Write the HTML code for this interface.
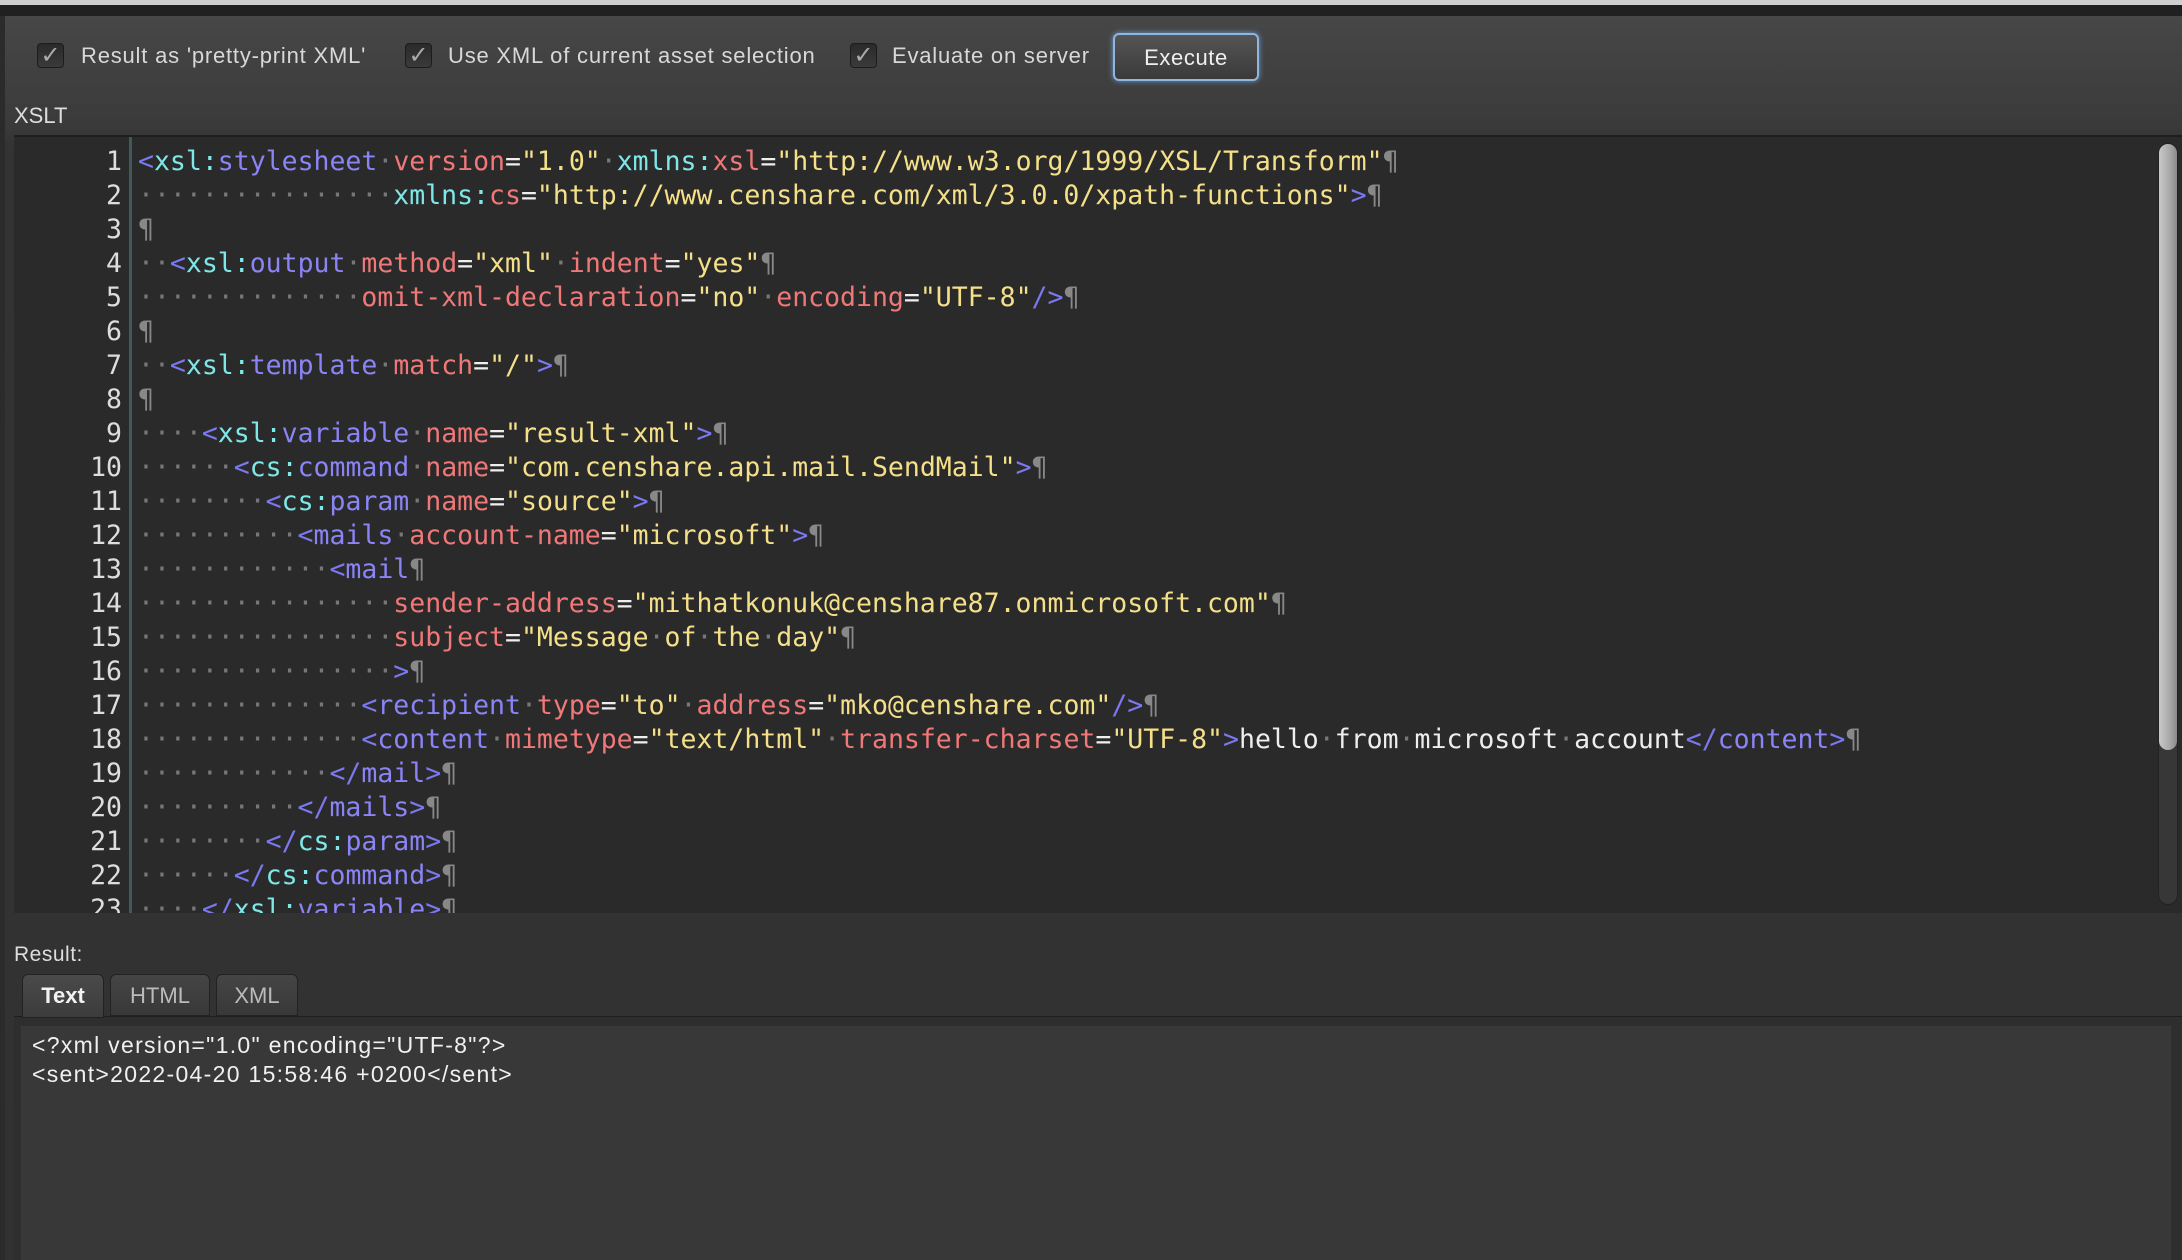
<!DOCTYPE html>
<html><head><meta charset="utf-8"><style>
*{margin:0;padding:0;box-sizing:border-box}
body{width:2182px;height:1260px;background:#2b2b2b;position:relative;overflow:hidden;font-family:"Liberation Sans",sans-serif;color:#ddd}
.topstrip{position:absolute;left:0;top:0;width:2182px;height:5px;background:#cfcfd2}
.dark{position:absolute;left:0;top:5px;width:2182px;height:11px;background:#202020}
.panel{position:absolute;left:5px;top:16px;right:0;bottom:0;background:linear-gradient(#474747 0px,#3a3a3a 110px,#333 130px,#313131 100%)}
.cb{position:absolute;top:43px;width:27px;height:25px;border-radius:4px;background:linear-gradient(#2a2a2a,#3a3a3a);border:1px solid #1c1c1c;color:#aaa;font-size:24px;text-align:center;line-height:24px}
.lbl{position:absolute;top:43px;font-size:22px;line-height:26px;color:#d8d8d8;letter-spacing:0.8px}
.btn{position:absolute;left:1113px;top:33px;width:146px;height:48px;border-radius:6px;border:2px solid #8fb6e0;box-shadow:0 0 6px #6a9ccc;background:linear-gradient(#555,#3a3a3a);color:#eee;font-size:22px;text-align:center;line-height:46px;letter-spacing:0.6px}
.xslt{position:absolute;left:14px;top:103px;font-size:22px;color:#ddd}
.editor{position:absolute;left:14px;top:135px;width:2168px;height:778px;background:#2a2a2a;overflow:hidden;border-top:2px solid #1e1e1e}
.gut{position:absolute;left:115px;top:0;width:3px;height:778px;background:#3e5a60}
.code{position:absolute;left:0;top:8px;font-family:"DejaVu Sans Mono","Liberation Mono",monospace;font-size:26.5px;line-height:34px;white-space:pre;color:#eee}
.ln{display:inline-block;width:108px;text-align:right;color:#ddd;margin-right:16px}
.p{color:#7b78f0}.n{color:#7ee8e8}.t{color:#8a84f5}.a{color:#f07878}.v{color:#f5e08a}.d{color:#777}.q{color:#888}
.sb{position:absolute;left:2158px;top:143px;width:20px;height:762px;border-radius:10px;background:#373737;border:1px solid #222}
.th{position:absolute;left:2159px;top:144px;width:18px;height:606px;border-radius:9px;background:linear-gradient(90deg,#c8c8c8,#a8a8a8 60%,#8a8a8a)}
.res{position:absolute;left:14px;top:943px;font-size:21px;color:#ddd;letter-spacing:0.5px}
.tab{position:absolute;top:974px;height:42px;border-radius:6px 6px 0 0;background:linear-gradient(#454545,#383838);border:1px solid #222;font-size:22px;color:#bbb;text-align:center;line-height:42px}
.tab.on{background:linear-gradient(#4a4a4a,#3c3c3c);color:#f2f2f2;font-weight:bold;height:44px}
.rbox{position:absolute;left:14px;top:1016px;width:2168px;height:244px;background:#2e2e2e;border-top:1px solid #1e1e1e}
.rin{position:absolute;left:21px;top:1026px;width:2150px;height:234px;background:#383838}
.rt{position:absolute;left:32px;top:1031px;font-size:23px;line-height:29px;color:#f0f0f0;white-space:pre;letter-spacing:1.3px}
</style></head><body>
<div class="topstrip"></div><div class="dark"></div>
<div class="panel"></div>
<div class="cb" style="left:37px">✓</div><div class="lbl" style="left:81px">Result as 'pretty-print XML'</div>
<div class="cb" style="left:405px">✓</div><div class="lbl" style="left:448px">Use XML of current asset selection</div>
<div class="cb" style="left:850px">✓</div><div class="lbl" style="left:892px">Evaluate on server</div>
<div class="btn">Execute</div>
<div class="xslt">XSLT</div>
<div class="editor">
<div class="gut"></div>
<div class="code"><span class="ln">1</span><span class="p">&lt;</span><span class="n">xsl:</span><span class="t">stylesheet</span><span class="d">·</span><span class="a">version</span>=<span class="v">"1.0"</span><span class="d">·</span><span class="n">xmlns:</span><span class="a">xsl</span>=<span class="v">"http://www.w3.org/1999/XSL/Transform"</span><span class="q">¶</span>
<span class="ln">2</span><span class="d">················</span><span class="n">xmlns:</span><span class="a">cs</span>=<span class="v">"http://www.censhare.com/xml/3.0.0/xpath-functions"</span><span class="p">&gt;</span><span class="q">¶</span>
<span class="ln">3</span><span class="q">¶</span>
<span class="ln">4</span><span class="d">··</span><span class="p">&lt;</span><span class="n">xsl:</span><span class="t">output</span><span class="d">·</span><span class="a">method</span>=<span class="v">"xml"</span><span class="d">·</span><span class="a">indent</span>=<span class="v">"yes"</span><span class="q">¶</span>
<span class="ln">5</span><span class="d">··············</span><span class="a">omit-xml-declaration</span>=<span class="v">"no"</span><span class="d">·</span><span class="a">encoding</span>=<span class="v">"UTF-8"</span><span class="p">/&gt;</span><span class="q">¶</span>
<span class="ln">6</span><span class="q">¶</span>
<span class="ln">7</span><span class="d">··</span><span class="p">&lt;</span><span class="n">xsl:</span><span class="t">template</span><span class="d">·</span><span class="a">match</span>=<span class="v">"/"</span><span class="p">&gt;</span><span class="q">¶</span>
<span class="ln">8</span><span class="q">¶</span>
<span class="ln">9</span><span class="d">····</span><span class="p">&lt;</span><span class="n">xsl:</span><span class="t">variable</span><span class="d">·</span><span class="a">name</span>=<span class="v">"result-xml"</span><span class="p">&gt;</span><span class="q">¶</span>
<span class="ln">10</span><span class="d">······</span><span class="p">&lt;</span><span class="n">cs:</span><span class="t">command</span><span class="d">·</span><span class="a">name</span>=<span class="v">"com.censhare.api.mail.SendMail"</span><span class="p">&gt;</span><span class="q">¶</span>
<span class="ln">11</span><span class="d">········</span><span class="p">&lt;</span><span class="n">cs:</span><span class="t">param</span><span class="d">·</span><span class="a">name</span>=<span class="v">"source"</span><span class="p">&gt;</span><span class="q">¶</span>
<span class="ln">12</span><span class="d">··········</span><span class="p">&lt;</span><span class="t">mails</span><span class="d">·</span><span class="a">account-name</span>=<span class="v">"microsoft"</span><span class="p">&gt;</span><span class="q">¶</span>
<span class="ln">13</span><span class="d">············</span><span class="p">&lt;</span><span class="t">mail</span><span class="q">¶</span>
<span class="ln">14</span><span class="d">················</span><span class="a">sender-address</span>=<span class="v">"mithatkonuk@censhare87.onmicrosoft.com"</span><span class="q">¶</span>
<span class="ln">15</span><span class="d">················</span><span class="a">subject</span>=<span class="v">"Message<span class="d">·</span>of<span class="d">·</span>the<span class="d">·</span>day"</span><span class="q">¶</span>
<span class="ln">16</span><span class="d">················</span><span class="p">&gt;</span><span class="q">¶</span>
<span class="ln">17</span><span class="d">··············</span><span class="p">&lt;</span><span class="t">recipient</span><span class="d">·</span><span class="a">type</span>=<span class="v">"to"</span><span class="d">·</span><span class="a">address</span>=<span class="v">"mko@censhare.com"</span><span class="p">/&gt;</span><span class="q">¶</span>
<span class="ln">18</span><span class="d">··············</span><span class="p">&lt;</span><span class="t">content</span><span class="d">·</span><span class="a">mimetype</span>=<span class="v">"text/html"</span><span class="d">·</span><span class="a">transfer-charset</span>=<span class="v">"UTF-8"</span><span class="p">&gt;</span>hello<span class="d">·</span>from<span class="d">·</span>microsoft<span class="d">·</span>account<span class="p">&lt;/</span><span class="t">content</span><span class="p">&gt;</span><span class="q">¶</span>
<span class="ln">19</span><span class="d">············</span><span class="p">&lt;/</span><span class="t">mail</span><span class="p">&gt;</span><span class="q">¶</span>
<span class="ln">20</span><span class="d">··········</span><span class="p">&lt;/</span><span class="t">mails</span><span class="p">&gt;</span><span class="q">¶</span>
<span class="ln">21</span><span class="d">········</span><span class="p">&lt;/</span><span class="n">cs:</span><span class="t">param</span><span class="p">&gt;</span><span class="q">¶</span>
<span class="ln">22</span><span class="d">······</span><span class="p">&lt;/</span><span class="n">cs:</span><span class="t">command</span><span class="p">&gt;</span><span class="q">¶</span>
<span class="ln">23</span><span class="d">····</span><span class="p">&lt;/</span><span class="n">xsl:</span><span class="t">variable</span><span class="p">&gt;</span><span class="q">¶</span></div>
</div>
<div class="sb"></div><div class="th"></div>
<div class="res">Result:</div>
<div class="rbox"></div>
<div class="tab on" style="left:22px;width:82px">Text</div>
<div class="tab" style="left:110px;width:100px">HTML</div>
<div class="tab" style="left:216px;width:82px">XML</div>
<div class="rin"></div>
<div class="rt">&lt;?xml version="1.0" encoding="UTF-8"?&gt;
&lt;sent&gt;2022-04-20 15:58:46 +0200&lt;/sent&gt;</div>
</body></html>
